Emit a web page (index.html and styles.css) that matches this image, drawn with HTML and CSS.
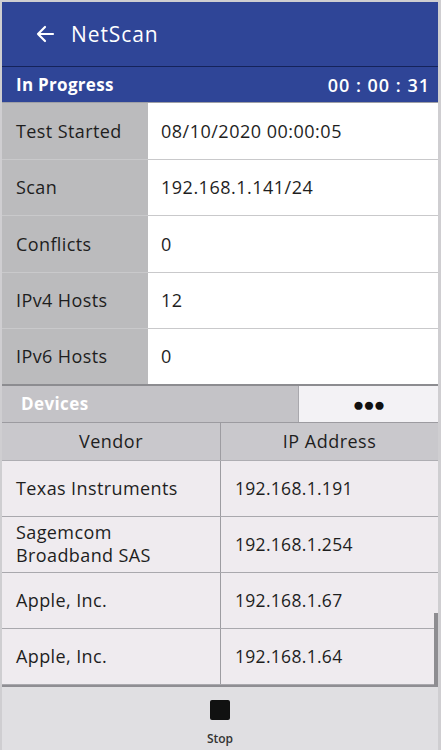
FILE: index.html
```html
<!DOCTYPE html>
<html lang="en">
<head>
    <meta charset="UTF-8">
    <meta name="viewport" content="width=device-width, initial-scale=1.0">
    <title>NetScan</title>
    <link rel="stylesheet" href="styles.css">
</head>
<body>
    <div class="screen">
        <header class="app-bar">
            <svg class="back" width="20" height="18" viewBox="0 0 20 18">
                <path d="M18 9H3M10 2L3 9l7 7" fill="none" stroke="#fff" stroke-width="2.2" stroke-linecap="round" stroke-linejoin="round"/>
            </svg>
            <span class="app-title">NetScan</span>
        </header>

        <div class="status">
            <span class="status-label">In Progress</span>
            <span class="status-timer">00 : 00 : 31</span>
        </div>

        <div class="info">
            <div class="info-row">
                <div class="info-label">Test Started</div>
                <div class="info-value">08/10/2020 00:00:05</div>
            </div>
            <div class="info-row">
                <div class="info-label">Scan</div>
                <div class="info-value">192.168.1.141/24</div>
            </div>
            <div class="info-row">
                <div class="info-label">Conflicts</div>
                <div class="info-value">0</div>
            </div>
            <div class="info-row">
                <div class="info-label">IPv4 Hosts</div>
                <div class="info-value">12</div>
            </div>
            <div class="info-row">
                <div class="info-label">IPv6 Hosts</div>
                <div class="info-value">0</div>
            </div>
        </div>

        <div class="devices-bar">
            <div class="devices-title">Devices</div>
            <div class="devices-more">●●●</div>
        </div>

        <div class="table">
            <div class="table-head">
                <div class="cell head">Vendor</div>
                <div class="cell head">IP Address</div>
            </div>
            <div class="table-body">
                <div class="table-row">
                    <div class="cell">Texas Instruments</div>
                    <div class="cell">192.168.1.191</div>
                </div>
                <div class="table-row">
                    <div class="cell">Sagemcom<br>Broadband SAS</div>
                    <div class="cell">192.168.1.254</div>
                </div>
                <div class="table-row">
                    <div class="cell">Apple, Inc.</div>
                    <div class="cell">192.168.1.67</div>
                </div>
                <div class="table-row">
                    <div class="cell">Apple, Inc.</div>
                    <div class="cell">192.168.1.64</div>
                </div>
                <div class="scroll-thumb"></div>
            </div>
        </div>

        <footer class="bottom-bar">
            <div class="stop-icon"></div>
            <div class="stop-label">Stop</div>
        </footer>
    </div>
</body>
</html>
```

FILE: styles.css
```css
* {
    margin: 0;
    padding: 0;
    box-sizing: border-box;
}

body {
    font-family: "Open Sans", "Noto Sans", sans-serif;
    background: #d9d8db;
    color: #1e1e1e;
}

.screen {
    width: 441px;
    height: 750px;
    border: 2px solid #cfced1;
    border-right-width: 3px;
    border-bottom: none;
    display: flex;
    flex-direction: column;
    background: #e0dfe2;
}

.app-bar {
    height: 65px;
    background: #2f4597;
    display: flex;
    align-items: center;
    padding-left: 33px;
    gap: 16px;
    border-bottom: 1px solid #15235a;
}

.app-title {
    color: #fff;
    font-size: 21px;
    letter-spacing: 0.9px;
}

.status {
    height: 35px;
    background: #2f4597;
    display: flex;
    align-items: center;
    justify-content: space-between;
    padding: 0 8px 0 14px;
    color: #fff;
}

.status-label {
    font-size: 17px;
    font-weight: 700;
    letter-spacing: 0.3px;
}

.status-timer {
    font-size: 18px;
    font-weight: 600;
    letter-spacing: 1px;
}

.info {
    display: flex;
    flex-direction: column;
    border-top: 1px solid #9fa0a6;
}

.info-row {
    height: 56.5px;
    display: flex;
    border-bottom: 1px solid #c9c9cb;
}

.info-row:last-child {
    border-bottom: 2px solid #8c8c90;
}

.info-label {
    width: 146px;
    background: #bbbbbd;
    display: flex;
    align-items: center;
    padding-left: 14px;
    font-size: 18px;
    letter-spacing: 0.4px;
}

.info-value {
    flex: 1;
    background: #fff;
    display: flex;
    align-items: center;
    padding-left: 13px;
    font-size: 18px;
    letter-spacing: 0.5px;
}

.devices-bar {
    height: 37px;
    display: flex;
    border-bottom: 1px solid #9c9ba0;
}

.devices-title {
    width: 297px;
    background: #c4c3c7;
    color: #fff;
    font-size: 17px;
    font-weight: 700;
    letter-spacing: 0.4px;
    display: flex;
    align-items: center;
    padding-left: 19px;
    border-right: 1px solid #a9a8ad;
}

.devices-more {
    flex: 1;
    background: #f3f2f5;
    display: flex;
    align-items: center;
    justify-content: center;
    font-size: 19px;
    letter-spacing: -1px;
    color: #111;
}

.table-head {
    height: 38px;
    display: flex;
    background: #c9c8cc;
    border-bottom: 1px solid #aeadb2;
}

.cell {
    width: 218px;
    display: flex;
    align-items: center;
    padding-left: 14px;
    font-size: 18px;
    line-height: 23px;
    letter-spacing: 0.4px;
}

.cell + .cell {
    flex: 1;
    border-left: 1px solid #9d9ca1;
    font-size: 17.5px;
    letter-spacing: 0.3px;
}

.cell.head {
    justify-content: center;
    padding-left: 0;
    font-size: 18px;
    letter-spacing: 0.5px;
}

.table-body {
    position: relative;
    background: #efebef;
    border-bottom: 2px solid #8f8e93;
}

.table-row {
    height: 56px;
    display: flex;
    border-bottom: 1px solid #a9a8ad;
}

.table-row:last-child {
    border-bottom: none;
}

.scroll-thumb {
    position: absolute;
    right: 0;
    bottom: 0;
    width: 4px;
    height: 72px;
    background: #8e8d91;
}

.bottom-bar {
    flex: 1;
    background: #e0dfe2;
    display: flex;
    flex-direction: column;
    align-items: center;
    padding-top: 13px;
}

.stop-icon {
    width: 20px;
    height: 20px;
    background: #111;
    border-radius: 2px;
}

.stop-label {
    margin-top: 10px;
    font-size: 12px;
    font-weight: 600;
    color: #333;
}
```
